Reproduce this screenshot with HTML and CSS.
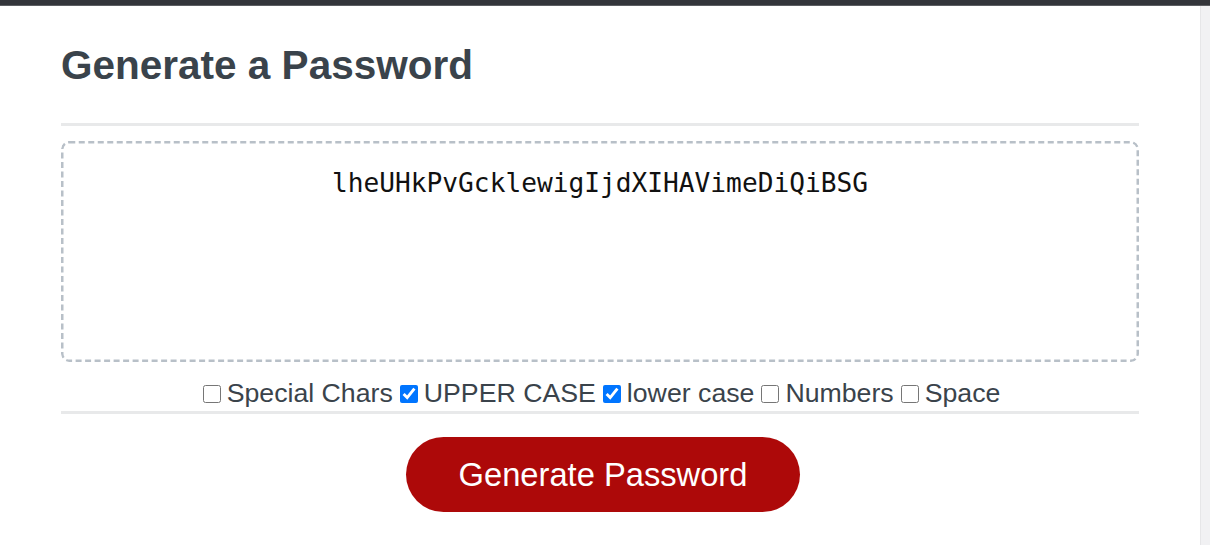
FILE: index.html
```html
<!DOCTYPE html>
<html lang="en">
<head>
<meta charset="utf-8">
<title>Password Generator</title>
<link rel="stylesheet" href="styles.css">
</head>
<body>
<div class="topbar"></div>
<div class="frame">
  <main class="page">
    <div class="container">
      <h1 class="title">Generate a Password</h1>
      <hr class="rule rule-top">
      <div class="output">lheUHkPvGcklewigIjdXIHAVimeDiQiBSG</div>
      <div class="options">
        <label class="option"><input type="checkbox" class="check">Special Chars</label>
        <label class="option"><input type="checkbox" class="check" checked>UPPER CASE</label>
        <label class="option"><input type="checkbox" class="check" checked>lower case</label>
        <label class="option"><input type="checkbox" class="check">Numbers</label>
        <label class="option"><input type="checkbox" class="check">Space</label>
      </div>
      <hr class="rule rule-bottom">
      <div class="actions">
        <button class="generate" type="button">Generate Password</button>
      </div>
    </div>
  </main>
  <div class="scrollbar"></div>
</div>
</body>
</html>
```
FILE: styles.css
```css
* { box-sizing: border-box; }
html, body { margin: 0; padding: 0; }
body {
  background: #ffffff;
  font-family: "Liberation Sans", Arial, sans-serif;
  color: #3a434b;
  height: 545px;
  overflow: hidden;
}
.topbar {
  height: 6px;
  background: #33353a;
  border-bottom: 1px solid #5c5e62;
}
.frame {
  display: flex;
  height: 539px;
}
.page {
  flex: 1;
  background: #ffffff;
}
.scrollbar {
  width: 10px;
  background: #f1f1f3;
  border-left: 1px solid #e6e6e8;
}
.container {
  width: 1078px;
  margin: 0 auto;
}
.title {
  margin: 35px 0 0;
  font-size: 40.5px;
  line-height: 48px;
  font-weight: 700;
  color: #3a434b;
}
.rule {
  border: 0;
  height: 3px;
  background: #e8e9ea;
  margin: 0;
}
.rule-top { margin-top: 34px; }
.output {
  margin-top: 15px;
  height: 221px;
  border-radius: 8px;
  background-image: url("data:image/svg+xml,%3Csvg xmlns='http://www.w3.org/2000/svg' width='1078' height='221'%3E%3Crect x='1.25' y='1.25' width='1075.5' height='218.5' rx='7' ry='7' fill='none' stroke='%23b8c0c8' stroke-width='2.5' stroke-dasharray='6 3.5'/%3E%3C/svg%3E");
  background-repeat: no-repeat;
  text-align: center;
  font-family: "DejaVu Sans Mono", "Liberation Mono", monospace;
  font-size: 26.2px;
  line-height: 32px;
  padding-top: 26px;
  color: #111;
}
.options {
  display: flex;
  justify-content: center;
  align-items: center;
  gap: 7px;
  margin-top: 16px;
  padding-left: 3px;
  height: 31px;
  font-size: 26.7px;
  color: #3a434b;
}
.option {
  display: flex;
  align-items: center;
  gap: 6px;
}
.check {
  width: 18px;
  height: 18px;
  margin: 0;
  accent-color: #0075ff;
}
.rule-bottom { margin-top: 2px; }
.actions {
  display: flex;
  justify-content: center;
  margin-top: 23px;
  padding-left: 6px;
}
.generate {
  width: 394px;
  height: 75px;
  border: 0;
  border-radius: 38px;
  background: #ad0909;
  color: #ffffff;
  font-family: "Liberation Sans", Arial, sans-serif;
  font-size: 32.7px;
}
```
